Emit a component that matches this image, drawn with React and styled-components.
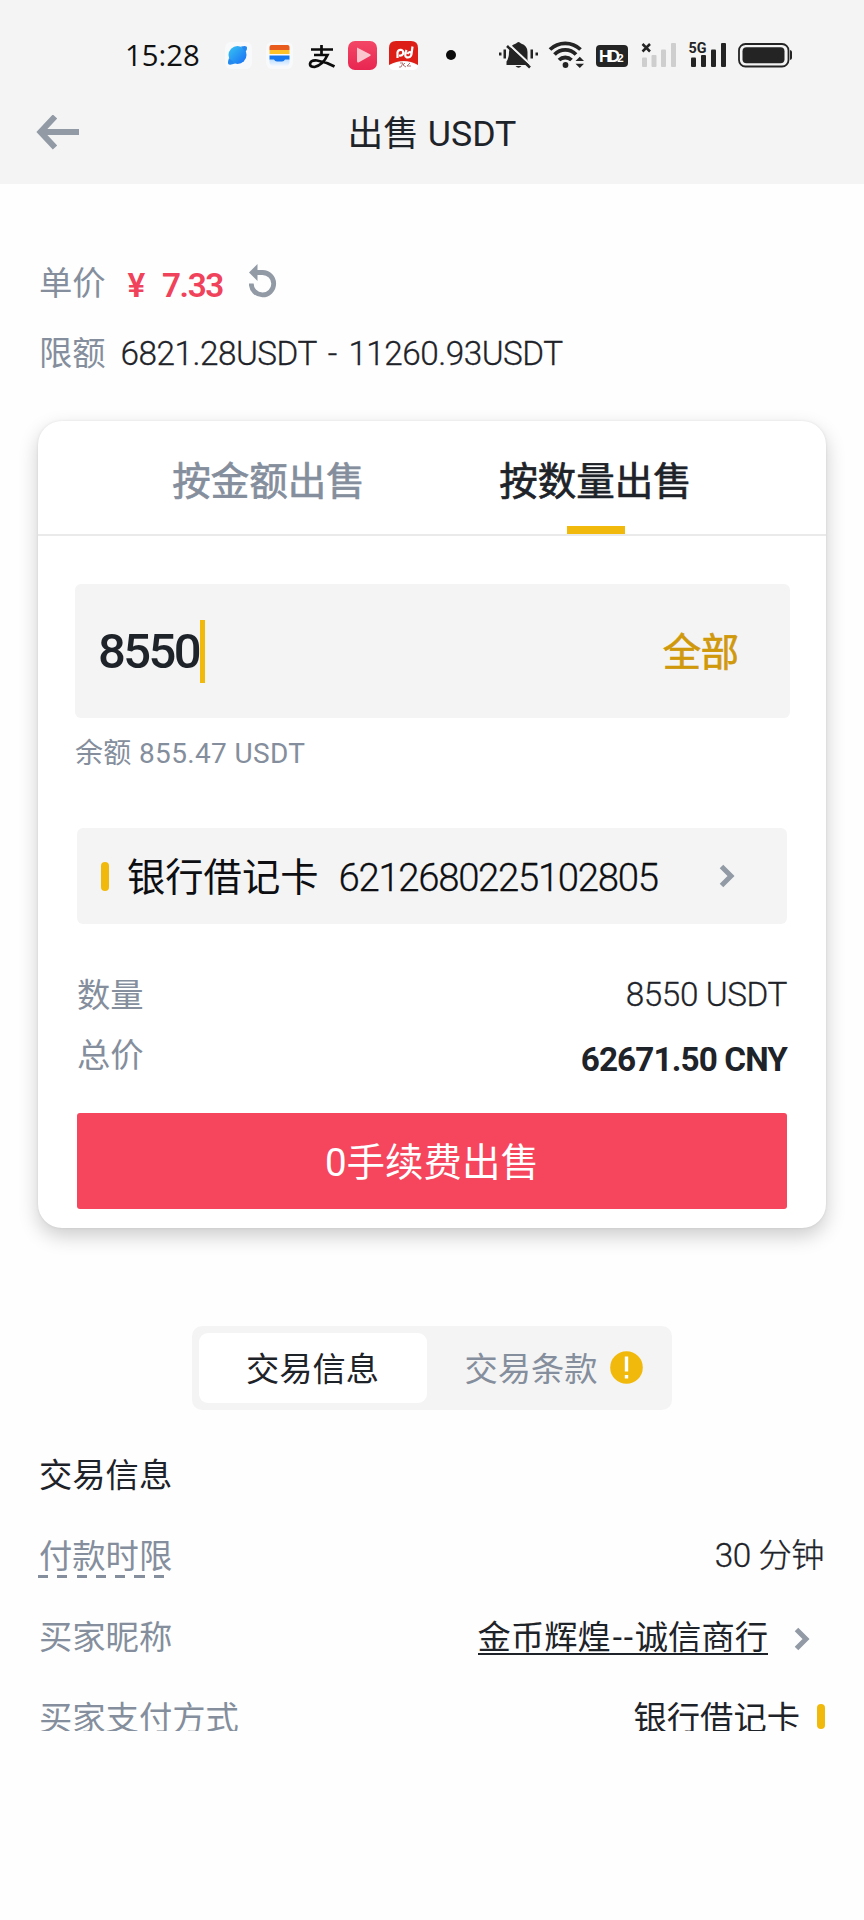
import styled, { createGlobalStyle } from "styled-components";

const GlobalStyle = createGlobalStyle`
  * {
    box-sizing: border-box;
  }

  body {
    margin: 0;
    background-color: #fff;
    color: #1e2329;
    font-family: Roboto, "Noto Sans CJK SC", sans-serif;
    font-size: 33.3px;
  }
`;

const Page = styled.main`
  width: 864px;
  min-height: 1920px;
  background-color: #fefefe;
`;

const Header = styled.header`
  height: 184px;
  background-color: #f4f4f4;
`;

const StatusBar = styled.div`
  display: flex;
  align-items: center;
  height: 110px;
  padding-left: 125px;
`;

const Clock = styled.span`
  flex: none;
  width: 98px;
  font-family: "Open Sans", sans-serif;
  font-size: 29.3px;
  font-weight: 500;
  line-height: 40px;
  color: #111;
`;

const AppIcons = styled.svg`
  display: block;
  flex: none;
  width: 240px;
  height: 40px;
`;

const SystemIcons = styled.svg`
  display: block;
  flex: none;
  width: 304px;
  height: 40px;
  margin-left: 29px;
`;

const TitleBar = styled.div`
  display: grid;
  grid-template-columns: 80px 1fr 80px;
  align-items: center;
  height: 48px;
  padding: 0 36px;
`;

const Title = styled.h1`
  margin: 0;
  font-size: 35.7px;
  font-weight: 400;
  line-height: 48px;
  text-align: center;
`;

const Summary = styled.section`
  padding: 65px 39px 0;
`;

const SummaryRow = styled.div`
  display: flex;
  align-items: center;
  height: 70px;
`;

const Label = styled.span`
  color: #848e9c;
  line-height: 48px;
`;

const Price = styled.span`
  display: flex;
  gap: 18px;
  margin: 3px 26px 0 22px;
  font-weight: 600;
  letter-spacing: -1.4px;
  color: #f0425a;
`;

const RefreshSvg = styled.svg`
  margin-top: -6px;
`;

const Limit = styled.span`
  margin: -2px 0 0 15px;
  font-weight: 300;
  letter-spacing: -0.5px;
  word-spacing: 4px;
  -webkit-text-stroke: 0.3px currentColor;
`;

const Card = styled.section`
  height: 807px;
  margin: 32px 38px 0;
  border-radius: 24px;
  background-color: #fff;
  box-shadow: 0 8px 20px rgba(0, 0, 0, 0.2), 0 0 3px rgba(0, 0, 0, 0.08);
`;

const Tabs = styled.div`
  display: flex;
  justify-content: center;
  height: 115px;
  border-bottom: 2px solid #eaeaea;
`;

const Tab = styled.div`
  display: flex;
  flex-direction: column;
  align-items: center;
  justify-content: space-between;
  width: 327px;
  padding-top: 33px;
  font-size: 38.5px;
  line-height: 56px;
  color: ${(props) => (props.$active ? "#1e2329" : "#848e9c")};
  -webkit-text-stroke: 0.7px currentColor;

  &::after {
    content: "";
    width: 58px;
    height: 8px;
    background-color: ${(props) => (props.$active ? "#f0b90b" : "transparent")};
  }
`;

const AmountBox = styled.div`
  display: flex;
  align-items: center;
  justify-content: space-between;
  height: 134px;
  margin: 48px 36px 0 37px;
  padding: 0 51px 0 23px;
  border-radius: 6px;
  background-color: #f4f4f4;
`;

const Amount = styled.div`
  display: flex;
  align-items: center;
  font-size: 49px;
  font-weight: 500;
  letter-spacing: -2.6px;

  &::after {
    content: "";
    width: 5px;
    height: 63px;
    margin-left: 1px;
    background-color: #f0b90b;
  }
`;

const AllButton = styled.span`
  padding-top: 3px;
  font-size: 38.2px;
  line-height: 56px;
  color: #d0980b;
  -webkit-text-stroke: 0.7px currentColor;
`;

const Balance = styled.p`
  margin: 15px 0 0 37px;
  font-size: 28px;
  line-height: 42px;
  letter-spacing: 0.35px;
  color: #848e9c;
`;

const BankRow = styled.div`
  display: flex;
  align-items: center;
  height: 96px;
  margin: 53px 39px 0;
  padding: 0 51px 0 24px;
  border-radius: 6px;
  background-color: #f4f4f4;
  font-size: 38.3px;
  color: #0c0e12;
`;

const Marker = styled.i`
  width: 8px;
  height: ${(props) => (props.$small ? "25px" : "29px")};
  margin-top: ${(props) => (props.$small ? "-4px" : "0")};
  border-radius: 4px;
  background-color: #f0b90b;
`;

const BankName = styled.span`
  margin-left: 18px;
  padding-top: 3px;
  line-height: 56px;
`;

const CardNumber = styled.span`
  margin: 0 auto 0 20px;
  padding-top: 2px;
  font-weight: 300;
  letter-spacing: -1.3px;
  -webkit-text-stroke: 0.3px currentColor;
`;

const Totals = styled.div`
  padding: 39px 39px 0;
`;

const TotalRow = styled.div`
  display: flex;
  justify-content: space-between;
  height: 60px;
  line-height: 60px;
`;

const TotalLabel = styled(Label)`
  line-height: 65px;
`;

const Quantity = styled.span`
  padding-top: 2px;
  font-weight: 300;
  letter-spacing: -0.4px;
  -webkit-text-stroke: 0.3px currentColor;
`;

const Total = styled.strong`
  padding-top: 7px;
  letter-spacing: -0.9px;
`;

const SellButton = styled.div`
  height: 96px;
  margin: 30px 39px 0;
  padding-top: 2px;
  border-radius: 3px;
  background-color: #f6465d;
  color: #fff;
  font-size: 38.5px;
  line-height: 96px;
  text-align: center;
`;

const Segmented = styled.div`
  display: flex;
  width: 480px;
  height: 84px;
  margin: 98px auto 0;
  padding: 7px;
  border-radius: 10px;
  background-color: #f4f4f4;
`;

const Segment = styled.div`
  display: flex;
  align-items: center;
  justify-content: center;
  gap: 12px;
  width: ${(props) => (props.$active ? "228px" : "238px")};
  padding: ${(props) => (props.$active ? "4px 1px 0 0" : "4px 0 0 15px")};
  border-radius: 9px;
  background-color: ${(props) => (props.$active ? "#fff" : "transparent")};
  color: ${(props) => (props.$active ? "#1e2329" : "#848e9c")};
  line-height: 48px;
`;

const WarningSvg = styled.svg`
  margin-top: -5px;
`;

const Details = styled.section`
  height: 321px;
  padding: 25px 39px 0;
  overflow: hidden;
`;

const DetailsTitle = styled.h2`
  margin: 0;
  font-size: 33.3px;
  font-weight: 400;
  line-height: 81px;
`;

const DetailRow = styled.div`
  display: flex;
  align-items: center;
  justify-content: space-between;
  height: 81px;
`;

const DashedLabel = styled(Label)`
  height: 45px;
  margin: -2px 0 0 -1px;
  padding-left: 1px;
  background: repeating-linear-gradient(90deg, #848e9c 0 10px, transparent 10px 19.3px)
    0 100% / 100% 3px no-repeat;
`;

const Value = styled.span`
  display: flex;
  align-items: center;
  gap: ${(props) => props.$gap || "0"};
  margin-right: ${(props) => props.$inset || "0"};
  line-height: 48px;
`;

const Minutes = styled(Value)`
  margin-top: -1px;
  font-weight: 300;
  letter-spacing: -0.5px;
  -webkit-text-stroke: 0.3px currentColor;
`;

const MerchantName = styled.span`
  height: 41px;
  margin-top: -7px;
  border-bottom: 2px solid #1e2329;
`;

const Dashes = styled.span`
  letter-spacing: 1.8px;
  margin-left: 2px;
`;

const ArrowSvg = styled.svg`
  margin-top: -2px;
`;

const ChevronSvg = styled.svg`
  margin-top: ${(props) => (props.$low ? "2px" : "0")};
`;

const BackArrow = () => (
  <ArrowSvg width="44" height="36" viewBox="0 0 44 36" fill="none" stroke="#929aa5" strokeWidth="6">
    <path d="M43 17H5M19 1.500L4.500 17L19 32.500" />
  </ArrowSvg>
);

const RefreshIcon = () => (
  <RefreshSvg width="28" height="34" viewBox="0 0 28 34">
    <path d="M2.300 19.500A11.200 11.200 0 1 0 13.500 8.500H7" fill="none" stroke="#929aa5" strokeWidth="4.800" />
    <path d="M0 8.500L8.500 0V17Z" fill="#929aa5" />
  </RefreshSvg>
);

const Chevron = ({ low }) => (
  <ChevronSvg $low={low} width="18" height="24" viewBox="0 0 18 24" fill="none" stroke="#929aa5" strokeWidth="5">
    <path d="M3.500 2.500L13 12L3.500 21.500" />
  </ChevronSvg>
);

const WarningIcon = () => (
  <WarningSvg width="33" height="33" viewBox="0 0 33 33">
    <circle cx="16.500" cy="16.500" r="16.300" fill="#f0b90b" />
    <path d="M14.800 5.500h3.400v15h-3.400zM14.800 24h3.400v3.400h-3.400z" fill="#fff" />
  </WarningSvg>
);

const NotificationIcons = () => (
  <AppIcons viewBox="223 35 240 40">
    <defs>
      <linearGradient id="browser" x1="0" y1="0" x2="1" y2="1">
        <stop offset="0" stopColor="#38c5f2" />
        <stop offset="1" stopColor="#176cf5" />
      </linearGradient>
      <linearGradient id="wallet" x1="0" y1="0" x2="0" y2="1">
        <stop offset="0" stopColor="#b9dcff" />
        <stop offset="1" stopColor="#f4f8ff" />
      </linearGradient>
      <linearGradient id="video" x1="0" y1="0" x2="0" y2="1">
        <stop offset="0" stopColor="#f34766" />
        <stop offset="1" stopColor="#e82651" />
      </linearGradient>
    </defs>
    <rect x="225" y="42" width="27" height="27" rx="6" fill="#f8f9fa" />
    <circle cx="237.500" cy="55" r="9" fill="url(#browser)" />
    <path d="M241 46.500Q247 45 247 47.500Q247.500 49 245.500 52ZM229 58Q227 64 229 64.500Q231 65 235 63.500Z" fill="#2389ef" />
    <rect x="266" y="42" width="27" height="27" rx="6" fill="#f8f9fa" />
    <path d="M269.500 59h20v3q0 4-4 4h-12q-4 0-4-4z" fill="url(#wallet)" />
    <path d="M269.500 50v-3q0-2 2-2h16q2 0 2 2v3z" fill="#e95b1d" />
    <path d="M269.500 50h20v4h-20z" fill="#fdc229" />
    <path d="M269.500 55.500h20v4h-4.500q-1 2-3 2h-5q-2 0-3-2h-4.500z" fill="#1677ee" />
    <g fill="none" stroke="#0b0b0b" strokeWidth="2.700">
      <path d="M311 49.500h22M321.500 45v10M314 55h13.500Q323 65 314.500 67Q310 67 310 64Q310.500 60 317 60.500Q326 62 334.500 66.500" />
    </g>
    <rect x="348" y="41" width="29" height="29" rx="7" fill="url(#video)" />
    <path d="M357 47.500L370.500 54.500Q371 55.500 370 56L358.500 62.500Q357 62.800 357 61Z" fill="#fbc5ce" />
    <path d="M389 48q0-7 7-7h15q7 0 7 7v17q-14-8-29 0z" fill="#dc1e16" />
    <path d="M389 66q14-8 29 0q-1 4-5 4h-19q-4 0-5-4z" fill="#fff" />
    <path
      d="M397.500 58V52.500Q398 49.500 401 49.800Q404 50.500 403 54Q402 56 399 55.500M406.500 50Q404 56.500 406.500 57.300Q411 58 411.500 54L412.500 46.500M411.500 53Q409 51 407.500 54"
      fill="none"
      stroke="#fff"
      strokeWidth="2.200"
    />
    <path d="M400 63h3l-2 4h-2M405 63l-2 2 3 2M410 63l-3 3h4" fill="none" stroke="#a66" strokeWidth="0.900" />
    <circle cx="451" cy="55" r="5" fill="#0b0b0b" />
  </AppIcons>
);

const StatusIcons = () => (
  <SystemIcons viewBox="492 35 304 40" fill="#242424">
    {/* muted bell */}
    <path d="M516 43.500Q518.500 40.500 521 43.500Q527.500 45.500 527.500 52V60L530.500 65H506.500V61.500Q509 58 509 52Q509.500 45.500 516 43.500Z" />
    <path d="M515.500 66h6q-3 3.500-6 0z" />
    <path d="M509 44.500L532 66" stroke="#f4f4f4" strokeWidth="2.200" />
    <path d="M507 46L530 67.500" stroke="#242424" strokeWidth="2.600" />
    <path d="M499 52.500h2.500v3h-2.500zM503.500 49.500h2.500v9h-2.500zM530.500 49.500h2.500v9h-2.500zM535.500 52.500h2.500v3h-2.500z" />
    {/* wifi */}
    <g fill="none" stroke="#242424" strokeWidth="3.800">
      <path d="M550 49.500A22 22 0 0 1 580.500 49.500M554.500 54.500A15 15 0 0 1 576 54.500M559 60A9 9 0 0 1 571.500 60" />
    </g>
    <circle cx="565.500" cy="65" r="2.900" />
    <path d="M575.500 61L579.800 56.800L584 61ZM575.500 63.800L579.800 68L584 63.800Z" />
    {/* HD badge */}
    <rect x="596" y="45" width="32" height="22" rx="4" />
    <text x="599" y="62.300" fill="#fff" fontFamily="Liberation Sans" fontSize="16.500" fontWeight="700" letterSpacing="-2.800">
      HD<tspan fontSize="11.500">2</tspan>
    </text>
    {/* no signal on the first sim */}
    <path d="M642.500 44L650 51.500M650 44L642.500 51.500" stroke="#242424" strokeWidth="2.500" />
    <g fill="#cecece">
      <rect x="642" y="57.500" width="5" height="9.500" rx="1" />
      <rect x="651.500" y="55" width="5" height="12" rx="1" />
      <rect x="661" y="49.500" width="5" height="17.500" rx="1" />
      <rect x="671" y="43" width="5" height="24" rx="1" />
    </g>
    {/* 5G on the second sim */}
    <text x="688.500" y="53" fontFamily="Roboto" fontSize="15.500" fontWeight="700" textLength="18" lengthAdjust="spacingAndGlyphs">5G</text>
    <rect x="691" y="57.500" width="5" height="9.500" rx="1" />
    <rect x="701" y="55" width="5" height="12" rx="1" />
    <rect x="711" y="49.500" width="5" height="17.500" rx="1" />
    <rect x="721" y="43" width="5" height="24" rx="1" />
    {/* battery */}
    <rect x="739" y="44" width="49.500" height="22.500" rx="6.500" fill="none" stroke="#242424" strokeWidth="1.800" />
    <rect x="742.500" y="47.300" width="42" height="16" rx="4" />
    <path d="M790 50q2 .5 2 2v6q0 1.500-2 2z" />
  </SystemIcons>
);

function App() {
  return (
    <Page>
      <GlobalStyle />
      <Header>
        <StatusBar>
          <Clock>15:28</Clock>
          <NotificationIcons />
          <StatusIcons />
        </StatusBar>
        <TitleBar>
          <BackArrow />
          <Title>出售 USDT</Title>
        </TitleBar>
      </Header>

      <Summary>
        <SummaryRow>
          <Label>单价</Label>
          <Price>
            <span>¥</span>
            <span>7.33</span>
          </Price>
          <RefreshIcon />
        </SummaryRow>
        <SummaryRow>
          <Label>限额</Label>
          <Limit>6821.28USDT - 11260.93USDT</Limit>
        </SummaryRow>
      </Summary>

      <Card>
        <Tabs>
          <Tab>按金额出售</Tab>
          <Tab $active>按数量出售</Tab>
        </Tabs>
        <AmountBox>
          <Amount>8550</Amount>
          <AllButton>全部</AllButton>
        </AmountBox>
        <Balance>余额 855.47 USDT</Balance>
        <BankRow>
          <Marker />
          <BankName>银行借记卡</BankName>
          <CardNumber>6212680225102805</CardNumber>
          <Chevron />
        </BankRow>
        <Totals>
          <TotalRow>
            <TotalLabel>数量</TotalLabel>
            <Quantity>8550 USDT</Quantity>
          </TotalRow>
          <TotalRow>
            <TotalLabel>总价</TotalLabel>
            <Total>62671.50 CNY</Total>
          </TotalRow>
        </Totals>
        <SellButton>0手续费出售</SellButton>
      </Card>

      <Segmented>
        <Segment $active>交易信息</Segment>
        <Segment>
          交易条款
          <WarningIcon />
        </Segment>
      </Segmented>

      <Details>
        <DetailsTitle>交易信息</DetailsTitle>
        <DetailRow>
          <DashedLabel>付款时限</DashedLabel>
          <Minutes $inset="1px">30 分钟</Minutes>
        </DetailRow>
        <DetailRow>
          <Label>买家昵称</Label>
          <Value $gap="25px" $inset="14px">
            <MerchantName>
              金币辉煌<Dashes>--</Dashes>诚信商行
            </MerchantName>
            <Chevron low />
          </Value>
        </DetailRow>
        <DetailRow>
          <Label>买家支付方式</Label>
          <Value $gap="17px">
            银行借记卡
            <Marker $small />
          </Value>
        </DetailRow>
      </Details>
    </Page>
  );
}

export default App;
